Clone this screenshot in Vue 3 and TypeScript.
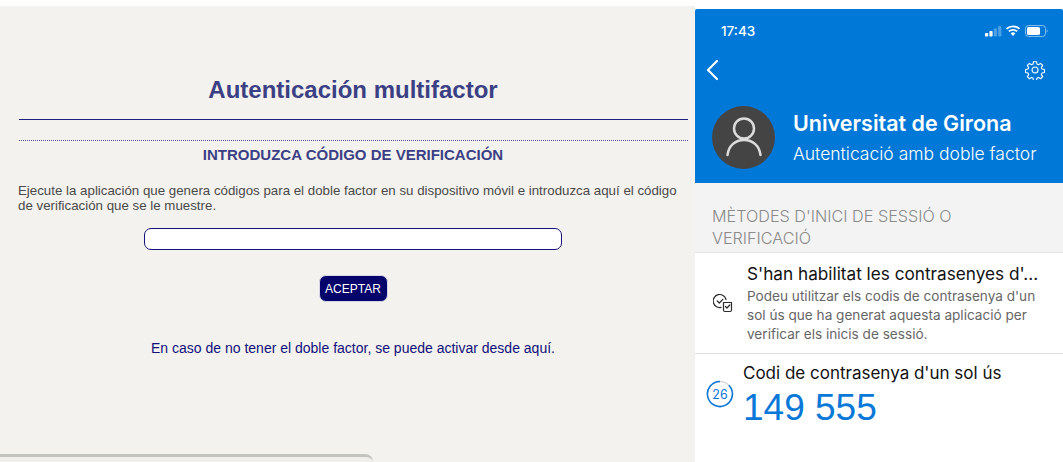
<script setup lang="ts">
const title: string = 'Autenticación multifactor'
const rows: string[] = [
  'Podeu utilitzar els codis de contrasenya d\'un',
  'sol ús que ha generat aquesta aplicació per',
  'verificar els inicis de sessió.',
]
</script>

<template>
  <div class="page">
    <section class="web">
      <div class="web-body">
        <h1 class="title">{{ title }}</h1>
        <div class="rule"></div>
        <div class="dots"></div>
        <h2 class="sub">INTRODUZCA CÓDIGO DE VERIFICACIÓN</h2>
        <p class="intro">Ejecute la aplicación que genera códigos para el doble factor en su dispositivo móvil e introduzca aquí el código de verificación que se le muestre.</p>
        <div class="input"></div>
        <button class="btn" type="button">ACEPTAR</button>
        <p class="link">En caso de no tener el doble factor, se puede activar desde aquí.</p>
      </div>
      <div class="web-foot"></div>
    </section>

    <section class="phone">
      <header class="hero">
        <div class="status">
          <span class="time">17:43</span>
          <svg class="status-icons" width="63" height="12" viewBox="0 0 63 12">
            <rect x="0" y="8" width="3.200" height="3.500" rx=".7" fill="#fff" />
            <rect x="4.400" y="6" width="3.200" height="5.500" rx=".7" fill="#fff" />
            <rect x="8.800" y="3.500" width="3.200" height="8" rx=".7" fill="#fff" opacity=".3" />
            <rect x="13.200" y="1" width="3.200" height="10.500" rx=".7" fill="#fff" opacity=".3" />
            <path d="M21.500 3.900a9.500 9.500 0 0 1 13 0M23.900 6.400a6 6 0 0 1 8.200 0" fill="none" stroke="#fff" stroke-width="1.800" />
            <path d="M25.700 8.500a3.200 3.200 0 0 1 4.600 0L28 11z" fill="#fff" />
            <rect x="40.500" y=".5" width="20" height="11" rx="3" fill="none" stroke="#fff" stroke-opacity=".5" />
            <rect x="42" y="2" width="13" height="8" rx="1.600" fill="#fff" />
            <path d="M61.700 4.500v3a1.600 1.600 0 0 0 0-3z" fill="#fff" opacity=".5" />
          </svg>
        </div>
        <div class="nav">
          <svg width="14" height="22" viewBox="0 0 14 22"><path d="M12 2 3 11l9 9" fill="none" stroke="#fff" stroke-width="2.200" stroke-linecap="round" stroke-linejoin="round" /></svg>
          <svg width="20" height="20" viewBox="0 0 24 24" fill="none" stroke="#fff" stroke-width="1.300" stroke-linejoin="round">
            <circle cx="12" cy="12" r="3.600" />
            <path d="M10.200 2h3.600l.6 2.900 1.800.8 2.500-1.600 2.500 2.500-1.600 2.500.8 1.800 2.900.6v3.600l-2.900.6-.8 1.800 1.600 2.500-2.500 2.500-2.500-1.600-1.800.8-.6 2.900h-3.600l-.6-2.900-1.800-.8-2.500 1.600-2.500-2.500 1.600-2.500-.8-1.800-2.900-.6v-3.600l2.900-.6.8-1.800-1.600-2.500 2.500-2.500 2.500 1.600 1.800-.8z" />
          </svg>
        </div>
        <div class="profile">
          <div class="avatar">
            <svg class="person" width="40" height="40" viewBox="0 0 40 40" fill="none" stroke="#dcdcdc" stroke-width="2.500" stroke-linecap="round">
              <circle cx="20" cy="10.500" r="10" />
              <path d="M3.500 37C4.500 28 11 22 20 22S35.500 28 36.500 37" />
            </svg>
          </div>
          <div class="who">
            <div class="org">Universitat de Girona</div>
            <div class="kind">Autenticació amb doble factor</div>
          </div>
        </div>
      </header>

      <div class="section-head">MÈTODES D'INICI DE SESSIÓ O VERIFICACIÓ</div>

      <div class="method">
        <svg class="method-icon" width="20" height="20" viewBox="0 0 20 20" fill="none" stroke="#2a2a2a" stroke-width="1.200" stroke-linecap="round" stroke-linejoin="round">
          <path d="M13 6.500A6.500 6.500 0 1 0 8 14.400" />
          <path d="M4.300 8l2 2 3.600-3.700" />
          <path d="M10.500 9.500h8v7.500a1.500 1.500 0 0 1-1.500 1.500h-5a1.500 1.500 0 0 1-1.500-1.500z" />
          <path d="M12.500 13.500l1.500 1.500 2.800-3" />
        </svg>
        <div class="method-text">
          <div class="method-title">S'han habilitat les contrasenyes d'...</div>
          <div class="method-desc">
            <div v-for="r in rows" :key="r">{{ r }}</div>
          </div>
        </div>
      </div>

      <div class="otp">
        <svg class="ring" width="28" height="28" viewBox="0 0 28 28">
          <circle cx="14" cy="14" r="12.500" fill="none" stroke="#d8d8d8" stroke-width="1.300" />
          <path d="M22.800 5.200A12.500 12.500 0 1 1 14 1.500" fill="none" stroke="#0a78d8" stroke-width="1.600" />
          <text x="14" y="18.500" text-anchor="middle" class="ring-text">26</text>
        </svg>
        <div class="otp-text">
          <div class="otp-title">Codi de contrasenya d'un sol ús</div>
          <div class="otp-code">149 555</div>
        </div>
      </div>
    </section>
  </div>
</template>

<style scoped>
.page {
  width: 1063px;
  height: 462px;
  display: flex;
  overflow: hidden;
  background: #fff;
  font-family: "Liberation Sans", Arial, sans-serif;
}
.web {
  width: 695px;
  height: 456px;
  margin-top: 6px;
  background: #f4f2ee;
  display: flex;
  flex-direction: column;
  justify-content: space-between;
  overflow: hidden;
}
.web-body {
  padding: 0 7px 0 18px;
  display: flex;
  flex-direction: column;
  align-items: center;
}
.title {
  margin: 69px 0 0;
  font-size: 24px;
  line-height: 30px;
  font-weight: 700;
  color: #3b4084;
}
.rule {
  align-self: stretch;
  margin: 14px 0 0 1px;
  height: 1px;
  background: #1c2080;
}
.dots {
  align-self: stretch;
  margin: 20px 0 0 1px;
  border-top: 1px dotted #4a4f90;
}
.sub {
  margin: 5px 0 0;
  font-size: 15px;
  line-height: 17px;
  font-weight: 700;
  color: #3b4084;
}
.intro {
  align-self: stretch;
  margin: 20px 0 0;
  font-size: 13.300px;
  line-height: 15px;
  color: #4a4a4a;
  font-weight: 400;
}
.input {
  margin-top: 15px;
  width: 418px;
  height: 22px;
  box-sizing: border-box;
  background: #fff;
  border: 1.500px solid #14147a;
  border-radius: 7px;
}
.btn {
  margin-top: 25px;
  width: 69px;
  height: 27px;
  padding: 0;
  border: 1px solid #d6d6e8;
  border-radius: 7px;
  background: #04046a;
  color: #fff;
  font-family: inherit;
  font-size: 12px;
}
.link {
  margin: 39px 0 0;
  font-size: 14px;
  line-height: 15px;
  color: #10107a;
}
.web-foot {
  width: 373px;
  height: 8px;
  flex: none;
  box-sizing: border-box;
  background: #f0efeb;
  border-top: 3px solid #c4c4bf;
  border-top-right-radius: 18px;
  filter: blur(0.6px);
}
.phone {
  flex: 1;
  margin-top: 9px;
  display: flex;
  flex-direction: column;
  min-width: 0;
}
.hero {
  height: 174px;
  flex: none;
  box-sizing: border-box;
  background: #0078d7;
  color: #fff;
  border-radius: 2px 2px 0 0;
  padding: 0 18px 0 0;
}
.status {
  display: flex;
  align-items: center;
  justify-content: space-between;
  padding: 13px 0 0 26px;
}
.time {
  font-family: Inter, "Liberation Sans", sans-serif;
  font-size: 13.500px;
  line-height: 18px;
  font-weight: 500;
}
.status-icons {
  margin-right: -3px;
}
.nav {
  display: flex;
  align-items: center;
  justify-content: space-between;
  padding: 6px 0 0 10px;
  margin-top: 13px;
}
.profile {
  display: flex;
  align-items: center;
  margin-top: 25px;
  padding-left: 17px;
}
.avatar {
  width: 63px;
  height: 63px;
  flex: none;
  border-radius: 50%;
  background: #444444;
  display: flex;
  align-items: center;
  justify-content: center;
}
.person {
  overflow: visible;
}
.who {
  margin-left: 18px;
}
.org {
  font-family: Inter, "Liberation Sans", sans-serif;
  font-size: 21.500px;
  line-height: 28px;
  font-weight: 600;
  white-space: nowrap;
}
.kind {
  font-family: Inter, "Liberation Sans", sans-serif;
  font-size: 17.500px;
  line-height: 24px;
  margin-top: 5px;
  white-space: nowrap;
  font-weight: 300;
}
.section-head {
  height: 69px;
  flex: none;
  box-sizing: border-box;
  background: #f3f3f3;
  padding: 22px 40px 0 17px;
  font-family: Inter, "Liberation Sans", sans-serif;
  font-size: 16.200px;
  line-height: 22px;
  color: #8a8a8a;
  font-weight: 300;
}
.method {
  height: 102px;
  flex: none;
  box-sizing: border-box;
  display: flex;
  align-items: center;
  border-top: 1px solid #e2e2e2;
  border-bottom: 1px solid #dfdfdf;
  background: #fff;
  padding-left: 18px;
}
.method-icon {
  flex: none;
}
.method-text {
  margin-left: 14px;
}
.method-title {
  font-family: Inter, "Liberation Sans", sans-serif;
  font-size: 17.200px;
  line-height: 24px;
  color: #111;
  white-space: nowrap;
  font-weight: 400;
}
.method-desc {
  margin-top: 1px;
  font-family: Inter, "Liberation Sans", sans-serif;
  font-size: 13.600px;
  line-height: 19px;
  color: #666;
  white-space: nowrap;
}
.otp {
  flex: 1;
  display: flex;
  align-items: flex-start;
  background: #fff;
  padding-left: 11px;
}
.ring {
  flex: none;
  margin-top: 26px;
}
.ring-text {
  font-family: Inter, "Liberation Sans", sans-serif;
  font-size: 12.500px;
  fill: #0a78d8;
}
.otp-text {
  margin-left: 9px;
  padding-top: 7px;
}
.otp-title {
  font-family: Inter, "Liberation Sans", sans-serif;
  font-size: 17px;
  line-height: 24px;
  color: #111;
  white-space: nowrap;
}
.otp-code {
  font-family: "Liberation Sans", Arial, sans-serif;
  font-size: 37px;
  line-height: 44px;
  color: #0a78d8;
  margin-top: 1px;
}
</style>
